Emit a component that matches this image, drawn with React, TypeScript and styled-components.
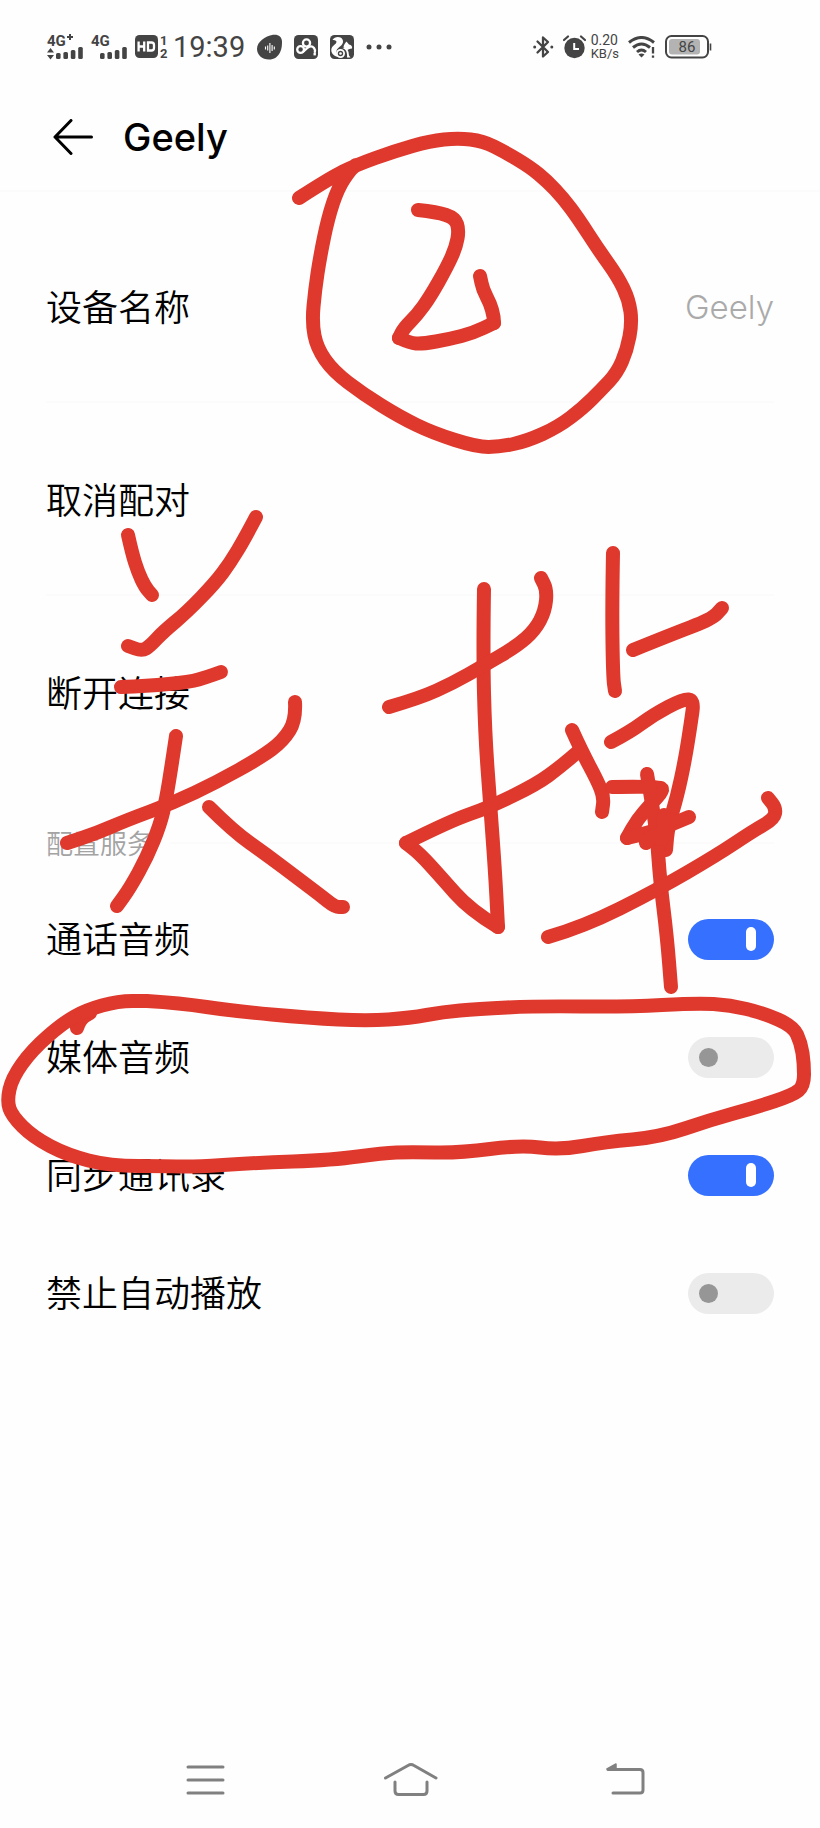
import React, { useState } from "react";
import styled, { createGlobalStyle } from "styled-components";

const INK = "#444444";
const UI_FONT = `Inter, "Noto Sans CJK SC", sans-serif`;
const CJK_FONT = `"Noto Sans CJK SC", sans-serif`;

const GlobalStyle = createGlobalStyle`
  *, *::before, *::after { box-sizing: border-box; }
  body { margin: 0; background: #fefefe; }
  button { border: 0; padding: 0; background: none; color: inherit; font: inherit; cursor: pointer; }
`;

const Screen = styled.div`
  position: relative;
  display: flex;
  flex-direction: column;
  min-height: 100vh;
  overflow: hidden;
  background: #fefefe;
  color: #000000;
  font-family: ${UI_FONT};
`;

const StatusBar = styled.header`
  display: flex;
  justify-content: space-between;
  align-items: center;
  height: 94px;
  padding: 0 108px 0 47px;
  color: ${INK};
  font-family: Roboto, sans-serif;
`;

const StatusGroup = styled.div<{ $gap: number }>`
  display: flex;
  align-items: center;
  gap: ${(p) => p.$gap}px;
`;

const Clock = styled.time`
  font-size: 29px;
  line-height: 32px;
`;

const NetSpeed = styled.div`
  font-size: 14px;
  line-height: 13px;
`;

const NetUnit = styled.div`
  font-size: 13px;
`;

const TitleBar = styled.div`
  display: flex;
  align-items: center;
  gap: 28px;
  height: 98px;
  padding: 0 46px 10px 53px;
  border-bottom: 2px solid #fbfbfb;
`;

const BackButton = styled.button`
  display: flex;
`;

const Title = styled.h1`
  margin: 0;
  font-size: 38px;
  line-height: 46px;
  font-weight: 500;
`;

const Content = styled.main`
  padding: 18px 46px 0;
`;

const ItemRow = styled.button`
  display: flex;
  justify-content: space-between;
  align-items: center;
  width: 100%;
  height: 193px;
  padding-top: 2px;
  border-bottom: 2px solid #fbfbfb;
  text-align: left;

  &:last-child { border-bottom-color: transparent; }
`;

const ItemLabel = styled.span`
  padding-bottom: 4px;
  font-family: ${CJK_FONT};
  font-size: 36px;
  line-height: 52px;
  font-weight: 350;
`;

const ItemValue = styled.span`
  color: #aaaaaa;
  font-size: 33px;
  line-height: 52px;
  font-weight: 300;
`;

const SectionLabel = styled.h2`
  display: flex;
  align-items: center;
  gap: 16px;
  height: 91px;
  margin: 0;
  padding-top: 16px;
  color: #a3a3a3;
  font-family: ${CJK_FONT};
  font-size: 27px;
  line-height: 40px;
  font-weight: 350;

  &::after {
    content: "";
    flex: 1;
    height: 2px;
    background: #fbfbfb;
  }
`;

const ToggleRow = styled.label`
  display: flex;
  justify-content: space-between;
  align-items: center;
  height: 118px;
  cursor: pointer;
`;

const Switch = styled.input`
  appearance: none;
  display: flex;
  align-items: center;
  width: 86px;
  height: 41px;
  margin: 0;
  padding: 0 11px;
  border-radius: 21px;
  background: #ebebeb;
  cursor: pointer;

  &::before {
    content: "";
    width: 19px;
    height: 19px;
    border-radius: 10px;
    background: #969696;
  }

  &:checked {
    justify-content: flex-end;
    padding: 0 18px;
    background: #3570ff;
  }

  &:checked::before {
    width: 10px;
    height: 24px;
    border-radius: 5px;
    background: #ffffff;
  }
`;

const NavBar = styled.nav`
  display: grid;
  grid-template-columns: repeat(3, 1fr);
  height: 96px;
  margin-top: auto;
  padding: 0 12.5%;
`;

const NavButton = styled.button`
  display: flex;
  justify-content: center;
  align-items: center;
`;

const MarkupLayer = styled.svg`
  position: absolute;
  top: 0;
  left: 0;
  width: 100%;
  height: auto;
  pointer-events: none;
`;

function SignalIcon({ label, arrows, offset }: { label: string; arrows?: boolean; offset: number }) {
  return (
    <svg width="37" height="30" viewBox="0 0 37 30" fill={INK} aria-hidden="true">
      <text x="0" y="14" fontFamily="Roboto, sans-serif" fontWeight="700" fontSize="15">{label}</text>
      {arrows && <path d="M20 5h6M23 2v6" stroke={INK} strokeWidth="2" />}
      {arrows && <path d="M0 20.5l3.500-4.500 3.500 4.500zM0 23l3.500 4.500L7 23z" />}
      {[6, 7, 9, 12].map((h, i) => (
        <rect key={i} x={offset + i * 7.4} y={27 - h} width="4.600" height={h} rx="1.500" />
      ))}
    </svg>
  );
}

function HdIcon() {
  return (
    <svg width="34" height="30" viewBox="0 -2 34 30" aria-hidden="true">
      <rect x="0" y="1" width="23" height="23" rx="4.500" fill={INK} />
      <path d="M3.600 7.500v10M9.200 7.500v10M3.600 12.500h5.600M13 8.500v8h3.500q2.500 0 2.500-2.500v-3q0-2.500-2.500-2.500z" fill="none" stroke="#fff" strokeWidth="2.300" />
      <text x="25" y="11" fill={INK} fontFamily="Roboto, sans-serif" fontWeight="700" fontSize="13">1</text>
      <text x="25" y="24" fill={INK} fontFamily="Roboto, sans-serif" fontWeight="700" fontSize="13">2</text>
    </svg>
  );
}

function VoiceIcon() {
  return (
    <svg width="25" height="26" viewBox="0 0 25 26" aria-hidden="true">
      <path d="M16 .8C21 0 25 2.500 25 7.500c0 4-.2 7-1.800 10.500C21 23 17 25.500 12 25.500 5 25.500 0 21 0 14.800 0 8 8 2 16 .8z" fill={INK} />
      <path d="M8.500 12.500v3M10.700 11.500v5M12.900 9v10M15.100 11v6M17.300 12.500v3" stroke="#fff" strokeWidth="1.100" />
    </svg>
  );
}

function CloudIcon() {
  return (
    <svg width="24" height="24" viewBox="0 0 24 24" aria-hidden="true">
      <rect width="24" height="24" rx="4.500" fill={INK} />
      <g fill="none" stroke="#fff" strokeWidth="2.300">
        <circle cx="12.500" cy="8" r="3.600" />
        <circle cx="6.600" cy="14.500" r="3.400" />
        <path d="M9.500 16.500l4.500-4q3.500-2.500 6 .5 1.500 2 .8 4" strokeLinecap="round" />
      </g>
      <rect x="19.500" y="18" width="2.400" height="2.400" fill="#fff" />
    </svg>
  );
}

function SquirrelIcon() {
  return (
    <svg width="24" height="24" viewBox="0 0 24 24" aria-hidden="true">
      <rect width="24" height="24" rx="4.500" fill={INK} />
      <path d="M2.500 5C4.500 1.500 10.500 1 12.500 4.500c1.500 3-.5 5.500-2.600 7-1.500 1.100-3 2.500-3.400 4.500-.4 2 .2 4 1.500 6C3 21 .5 17 1.500 13.500 2.500 10.500 6 9.500 6.500 7 6.500 5.500 4.500 5 2.500 5z" fill="#fff" />
      <path d="M16.500 6.500l2.500 3c2.500.5 3.500 2 3 4-2 .3-3.500.5-4.500 1.500l-4-3c.5-2.500 1.500-4 3-5.500zM12.500 13c3-1 5.500 1.500 6 4l.5 3.500 1.500 2H17c.5-4-.5-8-4.500-9.500z" fill="#fff" />
      <circle cx="10.500" cy="18.500" r="3.600" fill={INK} stroke="#fff" strokeWidth="1.800" />
      <circle cx="10.500" cy="18.500" r="1.300" fill="#fff" />
    </svg>
  );
}

function DotsIcon() {
  return (
    <svg width="26" height="6" viewBox="0 0 26 6" fill={INK} aria-hidden="true">
      <circle cx="3" cy="3" r="2.500" />
      <circle cx="13" cy="3" r="2.500" />
      <circle cx="23" cy="3" r="2.500" />
    </svg>
  );
}

function BluetoothIcon() {
  return (
    <svg width="21" height="24" viewBox="0 0 21 24" fill="none" stroke={INK} strokeWidth="2.300" aria-hidden="true">
      <path d="M4.500 6.500L15 17l-5 4.500v-19L15 7 4.500 17.500" strokeLinejoin="round" strokeLinecap="round" />
      <circle cx="1.700" cy="12" r="1.500" fill={INK} stroke="none" />
      <circle cx="18.800" cy="12" r="1.500" fill={INK} stroke="none" />
    </svg>
  );
}

function AlarmIcon() {
  return (
    <svg width="23" height="24" viewBox="0 0 23 24" aria-hidden="true">
      <circle cx="11.500" cy="13" r="10.200" fill={INK} />
      <path d="M1 5l4-3.500M22 5l-4-3.500" stroke={INK} strokeWidth="2.200" strokeLinecap="round" />
      <path d="M11.200 8v6H16" fill="none" stroke="#fff" strokeWidth="2" />
    </svg>
  );
}

function WifiIcon() {
  return (
    <svg width="28" height="22" viewBox="0 0 28 22" aria-hidden="true">
      <g fill="none" stroke={INK} strokeWidth="3">
        <path d="M1 6.500Q13.500-3.500 26 6.500" />
        <path d="M5 11.500Q13.500 4.500 22 11.500" />
        <path d="M9 16Q13.500 12 18 16" />
      </g>
      <path d="M10.500 18.500q3-2 6 0l-3 3z" fill={INK} />
      <path d="M25 11v6.500M25 19.500v2.200" stroke={INK} strokeWidth="2.300" />
    </svg>
  );
}

function BatteryIcon() {
  return (
    <svg width="47" height="24" viewBox="0 0 47 24" aria-hidden="true">
      <rect x="1" y="1" width="42" height="21.500" rx="5.500" fill="#fff" stroke={INK} strokeWidth="2" />
      <rect x="4" y="4" width="31" height="15.500" rx="3" fill="#b3b3b3" />
      <path d="M45.500 8.500v7" stroke={INK} strokeWidth="1.600" />
      <text x="22" y="17" textAnchor="middle" fill={INK} fontFamily="Roboto, sans-serif" fontWeight="400" fontSize="15">86</text>
    </svg>
  );
}

type Stroke = [number, number][];

const markupStrokes: Stroke[] = [
  // ring around the step number
  [[299, 198], [330, 178], [356, 165], [395, 151], [430, 141], [458, 138], [483, 141], [505, 152], [530, 167], [547, 181], [563, 198], [578, 218], [598, 249], [618, 277], [629, 300], [632, 323], [627, 350], [617, 373], [601, 390], [583, 408], [558, 427], [527, 441], [500, 447], [477, 447], [433, 433], [400, 417], [363, 394], [333, 371], [317, 348], [312, 323], [315, 290], [320, 257], [328, 218], [338, 188], [350, 170], [356, 165]],
  // step number
  [[418, 210], [437, 212], [455, 218], [459, 230], [456, 247], [447, 267], [430, 297], [417, 315], [404, 328], [399, 338]],
  [[399, 338], [410, 343], [422, 344], [450, 339], [473, 333], [494, 323]],
  [[494, 323], [494, 317], [490, 303], [483, 290], [480, 276]],
  // first character
  [[128, 535], [132, 553], [138, 572], [145, 587], [152, 595]],
  [[256, 517], [245, 538], [230, 563], [215, 583], [187, 612], [163, 632], [150, 646], [142, 651], [128, 646]],
  [[121, 687], [147, 686], [190, 682], [207, 677], [221, 672]],
  [[295, 702], [296, 720], [283, 741], [260, 758], [217, 782], [173, 803], [127, 820], [97, 833], [67, 843]],
  [[176, 736], [172, 763], [166, 800], [160, 825], [147, 857], [130, 888], [117, 906]],
  [[209, 807], [233, 831], [267, 855], [300, 880], [320, 895], [335, 907], [343, 907]],
  // second character, left part
  [[484, 589], [483, 653], [485, 733], [490, 803], [495, 870], [498, 927]],
  [[498, 927], [470, 910], [440, 876], [420, 854], [406, 843]],
  [[406, 843], [450, 821], [490, 807], [537, 784], [560, 767], [580, 750]],
  [[389, 707], [420, 698], [453, 683], [483, 666], [517, 646], [535, 630], [545, 611], [547, 590], [541, 578]],
  // second character, right part
  [[572, 730], [582, 752], [597, 780], [604, 797], [602, 812]],
  [[613, 553], [612, 607], [613, 677], [615, 691]],
  [[633, 650], [670, 635], [712, 619], [722, 608]],
  [[611, 742], [630, 732], [653, 715], [683, 699], [694, 700], [691, 722], [685, 760], [677, 797], [668, 827], [666, 850]],
  [[612, 787], [658, 786], [664, 790], [650, 805], [637, 820], [627, 838]],
  [[627, 838], [653, 832], [689, 817]],
  [[647, 774], [652, 803], [657, 837], [660, 880], [667, 937], [671, 987]],
  [[646, 843], [655, 830], [663, 845], [664, 815]],
  [[548, 937], [583, 927], [657, 890], [717, 855], [753, 831], [774, 819], [776, 808], [768, 798]],
  // loop around the media audio row
  [[77, 1028], [80, 1019], [90, 1013]],
  [[147, 1001], [180, 1003], [233, 1011], [310, 1018], [367, 1021], [410, 1018], [443, 1012], [477, 1009], [537, 1006], [627, 1007], [697, 1003], [730, 1005], [763, 1013], [793, 1026], [801, 1043], [804, 1063], [804, 1086], [793, 1095], [757, 1107], [710, 1120], [660, 1137], [605, 1142], [560, 1150], [520, 1145], [460, 1153], [410, 1152], [383, 1153], [333, 1160], [253, 1163], [193, 1167], [167, 1166], [110, 1166], [67, 1155], [33, 1137], [12, 1116], [7, 1101], [12, 1078], [32, 1050], [63, 1023], [86, 1010], [118, 1001], [147, 1001]],
];

// Smooths the recorded pen points: each point bends a curve between its neighbouring midpoints
function smoothPath(points: Stroke): string {
  let d = `M${points[0][0]} ${points[0][1]}`;
  for (let i = 1; i < points.length - 1; i++) {
    const [x, y] = points[i];
    const [nx, ny] = points[i + 1];
    d += `Q${x} ${y} ${(x + nx) / 2} ${(y + ny) / 2}`;
  }
  const [lx, ly] = points[points.length - 1];
  return `${d}L${lx} ${ly}`;
}

const services = [
  { id: "call", label: "通话音频", on: true },
  { id: "media", label: "媒体音频", on: false },
  { id: "contacts", label: "同步通讯录", on: true },
  { id: "autoplay", label: "禁止自动播放", on: false },
];

function ServiceToggle({ id, label, on }: { id: string; label: string; on: boolean }) {
  const [checked, setChecked] = useState(on);
  return (
    <ToggleRow htmlFor={id}>
      <ItemLabel>{label}</ItemLabel>
      <Switch id={id} type="checkbox" role="switch" checked={checked} onChange={() => setChecked(!checked)} />
    </ToggleRow>
  );
}

export default function App() {
  return (
    <Screen>
      <GlobalStyle />
      <StatusBar>
        <StatusGroup $gap={12}>
          <StatusGroup $gap={7}>
            <SignalIcon label="4G" arrows offset={9} />
            <SignalIcon label="4G" offset={9} />
            <StatusGroup $gap={4}>
              <HdIcon />
              <Clock>19:39</Clock>
            </StatusGroup>
          </StatusGroup>
          <VoiceIcon />
          <CloudIcon />
          <SquirrelIcon />
          <DotsIcon />
        </StatusGroup>
        <StatusGroup $gap={9}>
          <BluetoothIcon />
          <StatusGroup $gap={5}>
            <AlarmIcon />
            <NetSpeed>0.20<NetUnit>KB/s</NetUnit></NetSpeed>
          </StatusGroup>
          <WifiIcon />
          <BatteryIcon />
        </StatusGroup>
      </StatusBar>

      <TitleBar>
        <BackButton aria-label="返回">
          <svg width="42" height="36" viewBox="0 0 42 36" fill="none" stroke="#000000" strokeWidth="3" strokeLinecap="round" strokeLinejoin="round" aria-hidden="true">
            <path d="M38.500 18H2M18 1.500L2 18l16 16.500" />
          </svg>
        </BackButton>
        <Title>Geely</Title>
      </TitleBar>

      <Content>
        <div>
          <ItemRow><ItemLabel>设备名称</ItemLabel><ItemValue>Geely</ItemValue></ItemRow>
          <ItemRow><ItemLabel>取消配对</ItemLabel></ItemRow>
          <ItemRow><ItemLabel>断开连接</ItemLabel></ItemRow>
        </div>
        <SectionLabel>配置服务</SectionLabel>
        {services.map((s) => (
          <ServiceToggle key={s.id} {...s} />
        ))}
      </Content>

      <NavBar>
        <NavButton aria-label="最近任务">
          <svg width="80" height="40" viewBox="0 0 80 40" stroke="#808080" strokeWidth="3" strokeLinecap="round" aria-hidden="true">
            <path d="M23 7h35M23 20h35M23 33h35" />
          </svg>
        </NavButton>
        <NavButton aria-label="主屏幕">
          <svg width="80" height="40" viewBox="0 0 80 40" fill="none" stroke="#808080" strokeWidth="3" strokeLinecap="round" aria-hidden="true">
            <path d="M15.500 18L38 5.500q3-2 6 0L66 18M25 22v9q0 3.500 3.500 3.500h25q3.500 0 3.500-3.500v-9" />
          </svg>
        </NavButton>
        <NavButton aria-label="返回上一级">
          <svg width="80" height="40" viewBox="0 0 80 40" fill="none" stroke="#808080" strokeWidth="3" strokeLinecap="round" aria-hidden="true">
            <path d="M33 9.500h32q3 0 3 3V30q0 3-3 3H38" />
            <path d="M32 9l9-5v5z" fill="#808080" strokeWidth="1.500" strokeLinejoin="round" />
          </svg>
        </NavButton>
      </NavBar>

      <MarkupLayer viewBox="0 0 820 1828" fill="none" stroke="#df382c" strokeWidth="14" strokeLinecap="round" strokeLinejoin="round" aria-hidden="true">
        {markupStrokes.map((s, i) => (
          <path key={i} d={smoothPath(s)} />
        ))}
      </MarkupLayer>
    </Screen>
  );
}
